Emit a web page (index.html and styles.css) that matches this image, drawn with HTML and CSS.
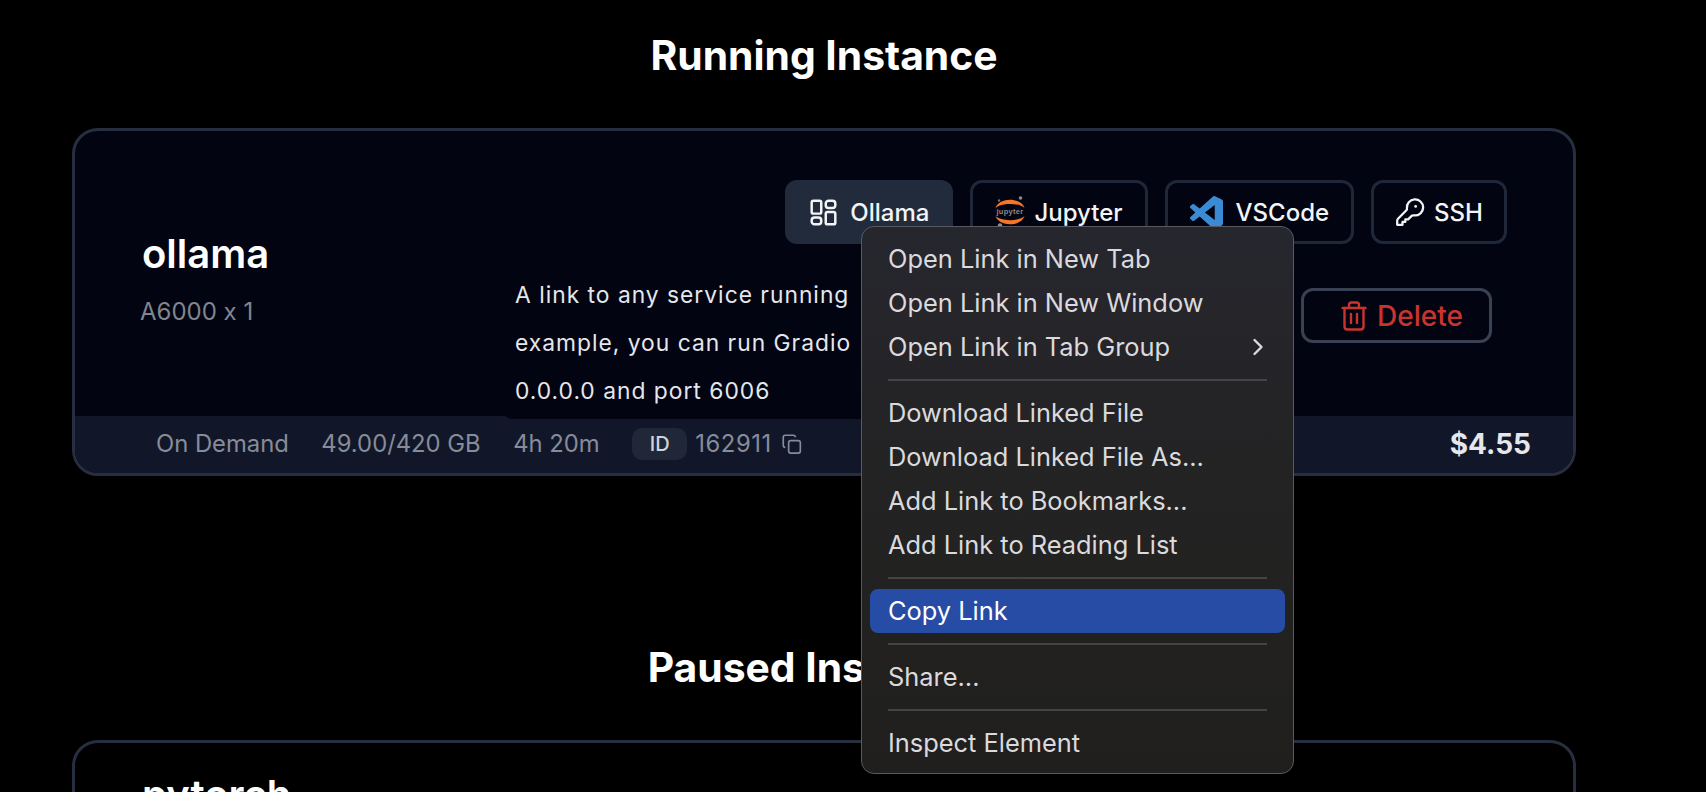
FILE: index.html
```html
<!DOCTYPE html>
<html lang="en">
<head>
    <meta charset="UTF-8">
    <title>Instances</title>
    <link rel="stylesheet" href="styles.css">
</head>
<body>

<div class="page">
    <h2 class="section-title section-title-first">Running Instance</h2>

    <div class="instance">
        <div class="instance-main">
            <div class="instance-info">
                <div class="instance-name">ollama</div>
                <div class="instance-gpu">A6000 x 1</div>
            </div>
            <div class="instance-actions">
                <div class="service-links">
                    <a class="service service-ollama active">
                        <svg class="icon" viewBox="0 0 24 24" fill="none" stroke="currentColor" stroke-width="2.200" stroke-linejoin="round">
                            <rect x="1.500" y="1.500" width="8.500" height="11.500" rx="1.500"/>
                            <rect x="14" y="1.500" width="8.500" height="6.500" rx="2.500"/>
                            <rect x="14" y="11.500" width="8.500" height="11" rx="1.500"/>
                            <rect x="1.500" y="16.500" width="8.500" height="6" rx="2.500"/>
                        </svg>
                        Ollama
                    </a>
                    <a class="service service-jupyter">
                        <svg class="icon icon-jupyter" viewBox="0 0 30 32">
                            <circle cx="25.500" cy="2" r="1.800" fill="#8a8a8b"/>
                            <circle cx="5" cy="29.500" r="2.300" fill="#8a8a8b"/>
                            <circle cx="4" cy="4.500" r="1.200" fill="#707071"/>
                            <path d="M0.500 12C4 1 26 1 29.500 12C24 6.500 6 6.500 0.500 12Z" fill="#f37726"/>
                            <path d="M0.500 20C6 25.500 24 25.500 29.500 20C26 31 4 31 0.500 20Z" fill="#f37726"/>
                            <text x="15" y="18" text-anchor="middle" class="jupyter-word">jupyter</text>
                        </svg>
                        Jupyter
                    </a>
                    <a class="service">
                        <svg class="icon icon-vscode" viewBox="0 0 24 24">
                            <path fill="#3b8bd4" d="M23.15 2.587L18.21.21a1.494 1.494 0 0 0-1.705.29l-9.46 8.63-4.12-3.128a.999.999 0 0 0-1.276.057L.327 7.261A1 1 0 0 0 .326 8.74L3.899 12 .326 15.26a1 1 0 0 0 .001 1.479L1.65 17.94a.999.999 0 0 0 1.276.057l4.12-3.128 9.46 8.63a1.492 1.492 0 0 0 1.704.29l4.942-2.377A1.5 1.5 0 0 0 24 20.06V3.939a1.5 1.5 0 0 0-.85-1.352zm-5.146 14.861L10.826 12l7.178-5.448v10.896z"/>
                        </svg>
                        VSCode
                    </a>
                    <a class="service service-ssh">
                        <svg class="icon icon-key" viewBox="0 0 24 24" fill="none" stroke="currentColor" stroke-width="1.800" stroke-linejoin="round">
                            <path d="M22.500 8.250a6.500 6.500 0 0 1-7.600 6.400c-.563-.097-1.159.026-1.563.43L10.500 17.900H8.250v2H6v2.350H1.750v-3.300c0-.597.237-1.170.659-1.591l6.700-6.700c.404-.404.527-1 .43-1.563A6.500 6.500 0 1 1 22.500 8.250z"/>
                            <circle cx="16.500" cy="7.500" r="1.100" fill="currentColor" stroke="none"/>
                        </svg>
                        SSH
                    </a>
                </div>
                <button class="delete-btn">
                    <svg class="icon-trash" viewBox="0 0 26 30" fill="none" stroke="currentColor" stroke-width="2.400" stroke-linecap="round" stroke-linejoin="round">
                        <path d="M1.500 7h23"/>
                        <path d="M22.500 7v18.500c0 1.800-1.200 3-3 3h-13c-1.800 0-3-1.200-3-3V7"/>
                        <path d="M8 7V4c0-1.500 1-2.500 2.500-2.500h5C17 1.500 18 2.500 18 4v3"/>
                        <path d="M10 13v9"/>
                        <path d="M16 13v9"/>
                    </svg>
                    Delete
                </button>
            </div>
        </div>

        <div class="instance-footer">
            <div class="footer-stats">
                <span>On Demand</span>
                <span>49.00/420 GB</span>
                <span>4h 20m</span>
                <span class="instance-id">
                    <span class="id-tag">ID</span>
                    <span class="id-value">162911</span>
                    <svg class="copy-icon" viewBox="0 0 24 24" fill="none" stroke="currentColor" stroke-width="2" stroke-linejoin="round">
                        <rect x="8" y="8" width="14" height="15" rx="2.500"/>
                        <path d="M4 16c-1.500 0-2.500-1-2.500-2.500V4C1.500 2.500 2.500 1.500 4 1.500h9.500C15 1.500 16 2.500 16 4"/>
                    </svg>
                </span>
            </div>
            <div class="instance-price">$4.55</div>
        </div>

        <!-- Tooltip do link -->
        <div class="link-tooltip">
            <div>A link to any service running</div>
            <div>example, you can run Gradio</div>
            <div>0.0.0.0 and port 6006</div>
        </div>
    </div>

    <h2 class="section-title section-title-second">Paused Instances</h2>

    <div class="instance instance-paused">
        <div class="instance-main">
            <div class="instance-info">
                <div class="instance-name">pytorch</div>
            </div>
        </div>
    </div>
</div>

<!-- Menu de contexto -->
<div class="context-menu">
    <div class="menu-item">Open Link in New Tab</div>
    <div class="menu-item">Open Link in New Window</div>
    <div class="menu-item">Open Link in Tab Group
        <svg class="chevron" viewBox="0 0 12 18" fill="none" stroke="currentColor" stroke-width="2.400" stroke-linecap="round" stroke-linejoin="round">
            <path d="M2.500 2l7 7-7 7"/>
        </svg>
    </div>
    <div class="menu-sep"></div>
    <div class="menu-item">Download Linked File</div>
    <div class="menu-item">Download Linked File As...</div>
    <div class="menu-item">Add Link to Bookmarks...</div>
    <div class="menu-item">Add Link to Reading List</div>
    <div class="menu-sep"></div>
    <div class="menu-item selected">Copy Link</div>
    <div class="menu-sep"></div>
    <div class="menu-item">Share...</div>
    <div class="menu-sep"></div>
    <div class="menu-item">Inspect Element</div>
</div>

</body>
</html>
```

FILE: styles.css
```css
html, body {
    height: 100%;
}
body {
    margin: 0;
    background-color: #000;
    color: #fff;
    font-family: Inter, "Liberation Sans", sans-serif;
    font-feature-settings: "calt" 0;
    overflow: hidden;
    position: relative;
}
.page {
    width: 1504px;
    margin-left: 72px;
}
.section-title {
    margin: 0;
    text-align: center;
    font-size: 40.800px;
    line-height: 46px;
    font-weight: 700;
}
.section-title-first {
    padding-top: 32px;
    margin-bottom: 50px;
}
.section-title-second {
    margin-top: 168px;
    margin-bottom: 50px;
}
.instance {
    position: relative;
    height: 348px;
    box-sizing: border-box;
    border: 3px solid #272e40;
    border-radius: 26px;
    background-color: #020412;
    display: flex;
    flex-direction: column;
    overflow: hidden;
}
.instance-paused {
    background-color: #000;
}
.instance-main {
    flex: 1;
    display: flex;
    justify-content: space-between;
    padding: 49px 66px 0 67px;
}
.instance-paused .instance-main {
    padding-top: 0;
}
.instance-info {
    padding-top: 51px;
}
.instance-paused .instance-info {
    padding-top: 29px;
}
.instance-name {
    font-size: 40px;
    line-height: 46px;
    font-weight: 600;
}
.instance-gpu {
    margin-top: 21px;
    margin-left: -2px;
    font-size: 24px;
    line-height: 28px;
    color: #80858f;
}
.instance-actions {
    display: flex;
    flex-direction: column;
    align-items: flex-end;
}
.service-links {
    display: flex;
    gap: 17px;
}
.service {
    display: flex;
    align-items: center;
    gap: 13px;
    height: 64px;
    box-sizing: border-box;
    padding: 0 22px;
    border: 3px solid #1f2738;
    border-radius: 12px;
    font-size: 24px;
    font-weight: 550;
    color: #f3f4f6;
}
.service.active {
    background-color: #222b3c;
    border-color: #222b3c;
}
.service-ollama {
    padding-right: 21px;
}
.service-jupyter, .service-ssh {
    gap: 9px;
}
.service-ssh {
    padding: 0 21px;
}
.icon {
    width: 27px;
    height: 27px;
    flex-shrink: 0;
}
.icon-jupyter {
    width: 30px;
    height: 32px;
}
.icon-vscode {
    width: 33px;
    height: 33px;
}
.icon-key {
    width: 30px;
    height: 30px;
}
.jupyter-word {
    font-family: "Liberation Sans", sans-serif;
    font-size: 7.500px;
    letter-spacing: 0.300px;
    fill: #8a8a8b;
}
.delete-btn {
    display: flex;
    align-items: center;
    justify-content: center;
    gap: 10px;
    width: 191px;
    height: 55px;
    margin-top: 44px;
    margin-right: 15px;
    padding: 0 0 0 11px;
    box-sizing: border-box;
    border: 3px solid #3a4152;
    border-radius: 12px;
    background: transparent;
    color: #c9342f;
    font-family: inherit;
    font-size: 28px;
    font-weight: 500;
}
.icon-trash {
    width: 26px;
    height: 30px;
    flex-shrink: 0;
}
.instance-footer {
    height: 57px;
    flex-shrink: 0;
    display: flex;
    align-items: center;
    justify-content: space-between;
    padding: 0 42px 2px 81px;
    box-sizing: border-box;
    background-color: #111729;
}
.footer-stats {
    display: flex;
    align-items: center;
    gap: 32.500px;
    font-size: 23.800px;
    color: #868c99;
}
.instance-id {
    display: flex;
    align-items: center;
    gap: 8px;
}
.id-value {
    letter-spacing: 0.600px;
}
.id-tag {
    width: 55px;
    height: 32px;
    display: flex;
    align-items: center;
    justify-content: center;
    border-radius: 10px;
    background-color: #1f2738;
    font-size: 20px;
    font-weight: 500;
    color: #d1d5db;
}
.copy-icon {
    width: 20px;
    height: 20px;
    margin-left: 2px;
}
.instance-price {
    font-size: 28px;
    font-weight: 700;
    color: #e5e7eb;
}
.link-tooltip {
    position: absolute;
    left: 429px;
    top: 119px;
    width: 790px;
    height: 169px;
    padding: 21px 11px 0;
    box-sizing: border-box;
    background-color: #020412;
    border-radius: 8px;
    font-size: 22.800px;
    line-height: 48px;
    letter-spacing: 1px;
    white-space: nowrap;
    color: #e5e7eb;
}
.context-menu {
    position: absolute;
    left: 861px;
    top: 226px;
    width: 433px;
    height: 548px;
    box-sizing: border-box;
    padding: 10px 8px 8px;
    border: 1.500px solid #5a5a5e;
    border-radius: 13px;
    background: linear-gradient(#26262e, #232323 50%, #201f1d);
    color: #dadade;
    font-size: 25.400px;
}
.menu-item {
    height: 44px;
    line-height: 43.500px;
    padding: 0 18px;
    border-radius: 8px;
    position: relative;
    white-space: nowrap;
}
.menu-item.selected {
    background-color: #274ca5;
    color: #fff;
}
.menu-sep {
    height: 2px;
    margin: 10px 18px;
    background-color: #444446;
}
.chevron {
    position: absolute;
    right: 21px;
    top: 13px;
    width: 12px;
    height: 18px;
}
```
